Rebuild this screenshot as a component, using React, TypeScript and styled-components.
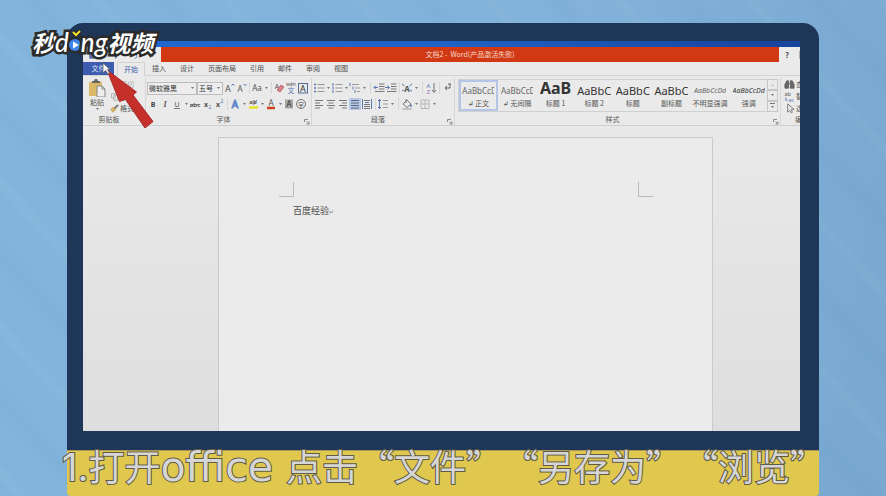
import React from "react";
import styled, { createGlobalStyle } from "styled-components";

const Global = createGlobalStyle`
  * { box-sizing: border-box; }
  body { margin: 0; overflow: hidden; font-family: "Noto Sans CJK SC", "Noto Sans", sans-serif; }
  button, select { font: inherit; color: inherit; }
`;

const Stage = styled.main`
  min-height: 100vh;
  padding: 23px 67px 0;
  display: flex;
  flex-direction: column;
  background:
    repeating-linear-gradient(48deg, transparent 0 9px, rgba(255, 255, 255, 0.03) 15px 17px, transparent 24px 51px, rgba(40, 90, 140, 0.03) 64px 66px, transparent 79px 97px),
    linear-gradient(100deg, #83b5dc, #82b2d9 60%, #78a8d0);
`;

const Laptop = styled.section`
  position: relative;
  flex: 1;
  display: flex;
  flex-direction: column;
  padding: 18px 19px 19px 16px;
  border-radius: 16px 16px 0 0;
  background: #1e3658;
`;

const Screen = styled.div`
  flex: 1;
  display: flex;
  flex-direction: column;
  overflow: hidden;
  background: #eaeaea;
  color: #555;
`;

const Wallpaper = styled.div`
  height: 6px;
  background: linear-gradient(90deg, #2168cf, #2062c6 50%, #17439b);
`;

const TitleBar = styled.header`
  display: flex;
  height: 15px;
`;

const QuickAccess = styled.div`
  width: 78px;
  display: flex;
  align-items: center;
  gap: 8px;
  padding: 0 2px 0 4px;
`;

const WindowTitle = styled.h1`
  flex: 1;
  margin: 0;
  background: #d03914;
  color: #f8d8cc;
  font-size: 7px;
  font-weight: 400;
  line-height: 15px;
  text-align: center;
  white-space: pre;
`;

const WindowButtons = styled.div`
  width: 21px;
  display: flex;
  gap: 4px;
  overflow: hidden;
  padding-left: 2px;
`;

const BareButton = styled.button<{ $w?: number; $on?: boolean }>`
  flex: none;
  width: ${(p) => p.$w ?? 12}px;
  height: 12px;
  padding: 0;
  border: 0;
  display: flex;
  align-items: center;
  justify-content: center;
  background: ${(p) => (p.$on ? "#b9c9e6" : "transparent")};
  svg { display: block; flex: none; }
`;

const HelpButton = styled(BareButton)`
  height: 15px;
  font-size: 8px;
  font-weight: 700;
`;

const Tabs = styled.nav`
  display: flex;
  height: 13px;
`;

const Tab = styled.button<{ $kind?: "file" | "active" }>`
  height: ${(p) => (p.$kind === "active" ? 14 : 13)}px;
  padding: 0 7px;
  border: 0;
  font-size: 7px;
  line-height: 13px;
  white-space: nowrap;
  background: transparent;
  color: #4c4c4c;
  ${(p) => p.$kind === "file" && "width: 31px; margin-right: 3px; background: #3d5cb0; color: #d8e2f6;"}
  ${(p) => p.$kind === "active" && "z-index: 1; background: #eaeaea; color: #3f60ac; box-shadow: inset 1px 1px #d2d2d2, inset -1px 0 #d2d2d2;"}
`;

const Ribbon = styled.div`
  display: flex;
  border-top: 1px solid #d3d3d3;
  border-bottom: 1px solid #cfcfcf;
  padding: 2px 0 0;
`;

const Group = styled.section<{ $w?: number }>`
  flex: ${(p) => (p.$w ? `none` : "1")};
  width: ${(p) => (p.$w ? `${p.$w}px` : "auto")};
  min-width: 0;
  display: flex;
  flex-direction: column;
  overflow: hidden;
  border-right: 1px solid #d6d6d6;
  &:last-child { border-right: 0; }
`;

const GroupBody = styled.div<{ $row?: boolean }>`
  height: 36px;
  display: flex;
  flex-direction: ${(p) => (p.$row ? "row" : "column")};
  gap: ${(p) => (p.$row ? 0 : 4)}px;
  padding: ${(p) => (p.$row ? 0 : 4)}px 0 0 1px;
`;

const GroupFoot = styled.footer`
  position: relative;
  height: 11px;
  padding-right: 10px;
  font-size: 7px;
  line-height: 11px;
  text-align: center;
  white-space: nowrap;
`;

const Launcher = styled.button`
  position: absolute;
  right: 1px;
  bottom: 0;
  width: 6px;
  height: 8px;
  padding: 0;
  border: 0;
  background: transparent;
  svg { display: block; }
`;

const ToolRow = styled.div`
  display: flex;
  height: 12px;
  align-items: center;
`;

const Rule = styled.span<{ $wide?: boolean }>`
  flex: none;
  width: ${(p) => (p.$wide ? 6 : 4)}px;
  height: 12px;
  background: linear-gradient(#d6d6d6, #d6d6d6) center / 1px 100% no-repeat;
`;

const Picker = styled.label<{ $w: number }>`
  position: relative;
  flex: none;
  width: ${(p) => p.$w}px;
  height: 13px;
  svg { position: absolute; right: 2px; top: 4px; pointer-events: none; }
  select {
    display: block;
    width: 100%;
    height: 13px;
    padding: 0 1px;
    border: 1px solid #bdbdbd;
    border-radius: 0;
    appearance: none;
    background: #ededed;
    color: #333;
    font-size: 7px;
    line-height: 11px;
  }
`;

const PasteButton = styled.button`
  width: 26px;
  padding: 1px 0 0;
  border: 0;
  display: flex;
  flex-direction: column;
  align-items: center;
  background: transparent;
  font-size: 7px;
  line-height: 10px;
`;

const SideList = styled.div<{ $inset?: number }>`
  display: flex;
  flex-direction: column;
  padding-left: ${(p) => p.$inset ?? 0}px;
`;

const SideButton = styled.button<{ $dim?: boolean }>`
  height: 12px;
  padding: 0;
  border: 0;
  display: flex;
  align-items: center;
  gap: 1px;
  background: transparent;
  color: ${(p) => (p.$dim ? "#aaa" : "#555")};
  font-size: 7px;
  line-height: 12px;
  white-space: nowrap;
  svg { flex: none; }
`;

const EditFoot = styled.footer`
  padding-left: 14px;
  font-size: 7px;
  line-height: 11px;
  white-space: nowrap;
`;

const Gallery = styled.div`
  flex: 1;
  display: flex;
  height: 33px;
  margin: 1px 2px 0;
  border: 1px solid #d0d0d0;
`;

const StyleCard = styled.button<{ $on?: boolean }>`
  flex: 1;
  min-width: 0;
  padding: 0;
  border: 0;
  background: transparent;
  box-shadow: ${(p) => (p.$on ? "inset 0 0 0 2px #b4c5e6" : "none")};
  overflow: hidden;
  display: flex;
  flex-direction: column;
  align-items: center;
`;

const Sample = styled.span<{ $size: number; $bold?: boolean; $italic?: boolean; $dark?: boolean }>`
  height: 19px;
  max-width: ${(p) => (p.$size === 8 ? 32 : 36)}px;
  overflow: hidden;
  font-family: "Noto Sans", sans-serif;
  font-size: ${(p) => p.$size}px;
  line-height: ${(p) => (p.$size > 12 ? 17 : 21)}px;
  font-weight: ${(p) => (p.$bold ? 700 : 400)};
  font-style: ${(p) => (p.$italic ? "italic" : "normal")};
  color: ${(p) => (p.$dark ? "#333" : "#666")};
  white-space: nowrap;
`;

const SampleName = styled.span`
  font-size: 7px;
  line-height: 9px;
  white-space: nowrap;
`;

const Scroller = styled.div`
  width: 9px;
  display: grid;
  grid-template-rows: repeat(3, 1fr);
`;

const ScrollButton = styled.button`
  padding: 0;
  border: 0;
  display: grid;
  place-items: center;
  background: transparent;
  box-shadow: 0 0 0 1px #c6c6c6;
`;

const Desk = styled.div`
  flex: 1;
  display: flex;
  padding: 11px 87px 0 135px;
  background: linear-gradient(#e9e9e9, #dedede);
`;

const Paper = styled.article`
  flex: 1;
  padding: 44px 59px 0 60px;
  border: 1px solid #cacaca;
  border-bottom: 0;
  background: #ebebeb;
`;

const Margins = styled.div`
  display: flex;
  justify-content: space-between;
`;

const Corner = styled.span<{ $side: "left" | "right" }>`
  width: 15px;
  height: 15px;
  border-bottom: 1px solid #bababa;
  border-${(p) => (p.$side === "left" ? "right" : "left")}: 1px solid #bababa;
`;

const Paragraph = styled.p`
  margin: 7px 0 0 14px;
  font-size: 9px;
  line-height: 14px;
  color: #4a4a4a;
  small { font-size: 6px; color: #888; }
`;

const Caption = styled.footer`
  position: relative;
  height: 46px;
  border-radius: 0 0 4px 4px;
  background: #e0c84f;
  box-shadow: inset 0 1px #a8965a;
`;

const CaptionText = styled.p`
  margin: 0 0 0 -5px;
  color: #d6d6d6;
  font-size: 36px;
  line-height: 31px;
  white-space: pre;
  text-spacing-trim: space-all;
  -webkit-text-stroke: 2px #5f5b45;
  paint-order: stroke fill;
`;

const Numeral = styled.span`
  font-family: Inter, sans-serif;
  font-size: 38px;
`;

const Wide = styled.span`
  font-family: "DejaVu Sans", sans-serif;
  font-size: 41px;
`;

const Watermark = styled.div`
  position: absolute;
  left: -35px;
  top: 2px;
  display: flex;
  align-items: baseline;
  color: #fff;
  font-size: 23px;
  font-weight: 700;
  font-style: italic;
  line-height: 35px;
  -webkit-text-stroke: 5px #2b2b2b;
  paint-order: stroke fill;
  svg { flex: none; overflow: visible; margin: 0 -1px; }
`;

const Roman = styled.span`
  font-family: Lato, sans-serif;
  font-size: 26px;
  font-weight: 500;
`;

const Pointer = styled.svg`
  position: absolute;
  left: 34px;
  top: 39px;
  width: 54px;
  height: 70px;
  overflow: visible;
  pointer-events: none;
`;

const G = "#777";
const B = "#5877b4";

const Caret = () => (
  <svg width="5" height="4" viewBox="0 0 5 4"><path d="M1 1h3L2.500 3z" fill="#777" /></svg>
);

const Glyph = ({ children, size = 12 }: { children?: React.ReactNode; size?: number }) => (
  <svg width={size} height={size} viewBox="0 0 12 12" fill="none" stroke={G} strokeWidth="1" fontFamily="Noto Sans, sans-serif">{children}</svg>
);

const T = ({ x = 6, y = 9, s = 8, c = "#555", children, ...rest }: any) => (
  <text x={x} y={y} fontSize={s} fill={c} stroke="none" textAnchor="middle" {...rest}>{children}</text>
);

const icons: Record<string, React.ReactNode> = {
  grow: <><T x={5} s={9} y={10}>A</T><path d="M8.500 3.500L10 2l1.500 1.500" stroke={B} /></>,
  shrink: <><T x={5} s={8} y={10}>A</T><path d="M8.500 2L10 3.500 11.500 2" stroke={B} /></>,
  case: <T s={8}>Aa</T>,
  clear: <><T x={4} y={7} s={7}>A</T><path d="M4 8l4-5 3 2-4 5z" fill="#d9808c" stroke="#c76b78" /></>,
  phonetic: <><T y={4} s={5}>wén</T><T y={11} s={7} c={B} fontFamily="Noto Sans CJK SC">文</T></>,
  box: <><rect x="1.500" y="1.500" width="9" height="9.500" stroke="#566b96" /><T y={9.500} s={9} c="#333">A</T></>,
  bold: <T s={7} fontWeight="700" c="#444">B</T>,
  italic: <T s={8} fontStyle="italic" fontWeight="700" fontFamily="Liberation Serif">I</T>,
  under: <><T s={7}>U</T><path d="M3 10.500h6" /></>,
  strike: <><T s={6} fontWeight="700">abc</T><path d="M1 6.500h10" /></>,
  sub: <><T x={5} s={7} fontWeight="700">x</T><T x={9} y={11} s={5} c={B}>2</T></>,
  sup: <><T x={5} s={7} fontWeight="700">x</T><T x={9} y={5} s={5} c={B}>2</T></>,
  glow: <text x="6" y="10" fontSize="10" fill="#eaeaea" stroke="#6488cc" textAnchor="middle">A</text>,
  mark: <><T y={6} s={6} fontWeight="700">ab</T><path d="M6 7l4-5" /><path d="M2 9.500h9" stroke="#e6e22e" strokeWidth="2.500" /></>,
  color: <><T y={8} s={8}>A</T><path d="M2 10h8" stroke="#d0421f" strokeWidth="2.500" /></>,
  shade: <><rect x="2" y="1.500" width="8" height="9" fill="#a5a5a5" stroke="none" /><T s={8} c="#333">A</T></>,
  ring: <><circle cx="6" cy="6" r="4.500" /><T y={8.500} s={6} fontFamily="Noto Sans CJK SC">字</T></>,
  bullets: <><path d="M4.500 2.500h7M4.500 6h7M4.500 9.500h7" stroke="#999" /><path d="M1 2.500h2M1 6h2M1 9.500h2" stroke={B} strokeWidth="1.500" /></>,
  numbers: <><path d="M4.500 2.500h7M4.500 6h7M4.500 9.500h7" stroke="#999" /><path d="M2 1v3M2 4.500v3M2 8v3" stroke={B} /></>,
  levels: <><path d="M3 2.500h7M6 6h5M8 9.500h3" stroke="#999" /><path d="M1 1v3M4 4.500v3M6 8v3" stroke={B} /></>,
  outdent: <><path d="M6 2h5.500M6 4.500h5.500M6 7h5.500M2 9.500h9.500" /><path d="M5 5.500H1M3 3.500l-2 2 2 2" stroke={B} /></>,
  indent: <><path d="M6 2h5.500M6 4.500h5.500M6 7h5.500M2 9.500h9.500" /><path d="M0 5.500h4M2.500 3.500l2 2-2 2" stroke={B} /></>,
  asian: <><T s={8} y={10} fontWeight="700">A</T><path d="M1 2l2.500 2M11 2L8.500 4M1 9l2-1M11 9L9 8" stroke={B} /></>,
  sort: <><T x={3.500} y={5.500} s={6} c={B}>A</T><T x={3.500} y={11.500} s={6} c="#9a69ad">Z</T><path d="M9 1v9M7 8l2 2.500L11 8" /></>,
  marks: <path d="M9 2v4H4M6 4L4 6l2 2M7 2h3" stroke="#666" />,
  left: <path d="M2 2.500h8M2 5h5M2 7.500h8M2 10h5" />,
  center: <path d="M2 2.500h8M3.500 5h5M2 7.500h8M3.500 10h5" />,
  right: <path d="M2 2.500h8M5 5h5M2 7.500h8M5 10h5" />,
  justify: <path d="M2 2.500h8M2 5h8M2 7.500h8M2 10h8" stroke="#59657c" />,
  spread: <><path d="M1.500 1v10M10.500 1v10" stroke={B} /><path d="M3 2.500h6M3 6.500h6M3 8.500h6M3 10.500h6" /><path d="M4 4.500h4" stroke={B} /></>,
  spacing: <><path d="M2.500 1.500v9M1 3l1.500-1.500L4 3M1 9l1.500 1.500L4 9" stroke={B} /><path d="M6 2.500h5M6 6h5M6 9.500h5" stroke="#999" /></>,
  fill: <><path d="M2 6l4-4 4 4-4 3.500zM5 1v4" /><path d="M10 6.500v2.500" stroke={B} strokeWidth="1.500" /><path d="M1.500 11h9" stroke="#999" /></>,
  borders: <path d="M2 2h8v8.500H2zM6 2v8.500M2 6h8" stroke="#b5b5b5" />,
  cut: <path d="M3 1l5 7M9 1L4 8" stroke="#aaa" />,
  copy: <path d="M2 2h5v6H2zM5 4h5v7H5z" stroke="#aaa" fill="#e6e6e6" />,
  brush: <><path d="M1 7l4-3 3 3-4 4z" fill="#d9b765" stroke="#c3a253" /><path d="M6 5l4-4 1 1-4 4z" fill="#666" stroke="#666" /></>,
  find: <path d="M1 10V6l2-4h2v8zM7 10V2h2l2 4v4zM5 5h2" fill="#666" stroke="#666" />,
  replace: <><T x={4} y={5.500} s={6}>ab</T><T x={8} y={11.500} s={6} c={B}>ac</T><path d="M2 7v3h2" stroke={B} /></>,
  select: <path d="M4 1v9l2-2 2 3 1-1-1-3h3z" />,
  save: <path d="M2 2h8v8H2zM4 2v3h4V2" fill="#5b6fb4" stroke="#5b6fb4" />,
  undo: <path d="M3 5h5a2 2 0 010 5M5 2L2 5l3 3" stroke={B} />,
};

const labels: Record<string, string> = {
  grow: "增大字号", shrink: "减小字号", case: "更改大小写", clear: "清除格式", phonetic: "拼音指南", box: "字符边框",
  bold: "加粗", italic: "倾斜", under: "下划线", strike: "删除线", sub: "下标", sup: "上标", glow: "文本效果", mark: "突出显示",
  color: "字体颜色", shade: "字符底纹", ring: "带圈字符", bullets: "项目符号", numbers: "编号", levels: "多级列表", outdent: "减少缩进",
  indent: "增加缩进", asian: "中文版式", sort: "排序", marks: "显示标记", left: "左对齐", center: "居中", right: "右对齐",
  justify: "两端对齐", spread: "分散对齐", spacing: "行距", fill: "底纹", borders: "边框",
};

const Tools = ({ items }: { items: string[] }) => (
  <>
    {items.map((name, i) => {
      if (name === "|") return <Rule key={i} />;
      if (name === "||") return <Rule key={i} $wide />;
      if (name === "v") return <BareButton key={i} $w={6} aria-label={`${labels[items[i - 1]]}选项`}><Caret /></BareButton>;
      return <BareButton key={i} $on={name === "justify"} aria-label={labels[name]}><Glyph>{icons[name]}</Glyph></BareButton>;
    })}
  </>
);

const Foot = ({ name, launch = true }: { name: string; launch?: boolean }) => (
  <GroupFoot>
    {name}
    {launch && (
      <Launcher aria-label={`${name}设置`}>
        <svg width="6" height="7" viewBox="0 0 6 7" fill="none" stroke="#888"><path d="M.5 4V1.500H4M2.500 3.500l2.500 2.500M5 3.500V6H2.500" /></svg>
      </Launcher>
    )}
  </GroupFoot>
);

const styleCards = [
  { text: "AaBbCcD", name: "↲ 正文", size: 8 },
  { text: "AaBbCcD", name: "↲ 无间隔", size: 8 },
  { text: "AaB", name: "标题 1", size: 16, bold: true, dark: true },
  { text: "AaBbC", name: "标题 2", size: 11, dark: true },
  { text: "AaBbC", name: "标题", size: 11, dark: true },
  { text: "AaBbC", name: "副标题", size: 11, dark: true },
  { text: "AaBbCcDd", name: "不明显强调", size: 7, italic: true },
  { text: "AaBbCcDd", name: "强调", size: 7, italic: true, dark: true },
];

const moreTabs = ["插入", "设计", "页面布局", "引用", "邮件", "审阅", "视图"];

export default function App() {
  return (
    <>
      <Global />
      <Stage>
        <Laptop>
          <Screen>
            <Wallpaper />
            <TitleBar>
              <QuickAccess>
                <BareButton aria-label="保存"><Glyph size={10}>{icons.save}</Glyph></BareButton>
                <BareButton aria-label="撤消"><Glyph size={10}>{icons.undo}</Glyph></BareButton>
                <BareButton aria-label="恢复"><Glyph size={10}>{icons.undo}</Glyph></BareButton>
                <BareButton $w={10} aria-label="自定义快速访问工具栏">
                  <svg width="5" height="7" viewBox="0 0 5 7"><path d="M1 1h3v1H1zM1 4h3L2.500 6z" fill="#666" /></svg>
                </BareButton>
              </QuickAccess>
              <WindowTitle>文档2 -  Word(产品激活失败)</WindowTitle>
              <WindowButtons>
                <HelpButton>?</HelpButton>
                <HelpButton aria-label="功能区显示选项"><Glyph><path d="M3 2h8v8H3zM3 4h8" /></Glyph></HelpButton>
              </WindowButtons>
            </TitleBar>
            <Tabs>
              <Tab $kind="file">文件</Tab>
              <Tab $kind="active">开始</Tab>
              {moreTabs.map((t) => <Tab key={t}>{t}</Tab>)}
            </Tabs>
            <Ribbon>
              <Group $w={63}>
                <GroupBody $row>
                  <PasteButton>
                    <svg width="18" height="18" viewBox="0 0 18 18">
                      <path d="M1 3h13v14H1z" fill="#dcb969" />
                      <path d="M4 4V2h2l1-2h2l1 2h2v2z" fill="#666" />
                      <path d="M9 7h5l3 3v8H9z" fill="#eee" stroke="#888" />
                      <path d="M14 7v3h3" fill="none" stroke="#888" />
                    </svg>
                    粘贴
                    <Caret />
                  </PasteButton>
                  <SideList>
                    <SideButton $dim><Glyph size={9}>{icons.cut}</Glyph>剪切</SideButton>
                    <SideButton $dim><Glyph size={9}>{icons.copy}</Glyph>复制</SideButton>
                    <SideButton><Glyph size={9}>{icons.brush}</Glyph>格式刷</SideButton>
                  </SideList>
                </GroupBody>
                <Foot name="剪贴板" launch={false} />
              </Group>
              <Group $w={166}>
                <GroupBody>
                  <ToolRow>
                    <Picker $w={50}>
                      <select aria-label="字体" defaultValue="微软雅黑"><option>微软雅黑</option></select>
                      <Caret />
                    </Picker>
                    <Picker $w={26}>
                      <select aria-label="字号" defaultValue="五号"><option>五号</option></select>
                      <Caret />
                    </Picker>
                    <Tools items={["grow", "shrink", "|", "case", "v", "|", "clear", "phonetic", "box"]} />
                  </ToolRow>
                  <ToolRow>
                    <Tools items={["bold", "italic", "under", "v", "strike", "sub", "sup", "|", "glow", "v", "mark", "v", "color", "v", "shade", "ring"]} />
                  </ToolRow>
                </GroupBody>
                <Foot name="字体" />
              </Group>
              <Group $w={143}>
                <GroupBody>
                  <ToolRow>
                    <Tools items={["bullets", "v", "numbers", "v", "levels", "v", "||", "outdent", "indent", "|", "asian", "v", "||", "sort", "|", "marks"]} />
                  </ToolRow>
                  <ToolRow>
                    <Tools items={["left", "center", "right", "justify", "spread", "|", "spacing", "v", "||", "fill", "v", "borders", "v"]} />
                  </ToolRow>
                </GroupBody>
                <Foot name="段落" />
              </Group>
              <Group>
                <GroupBody $row>
                  <Gallery>
                    {styleCards.map((c, i) => (
                      <StyleCard key={c.name} $on={i === 0}>
                        <Sample $size={c.size} $bold={c.bold} $italic={c.italic} $dark={c.dark}>{c.text}</Sample>
                        <SampleName>{c.name}</SampleName>
                      </StyleCard>
                    ))}
                    <Scroller>
                      <ScrollButton aria-label="向上"><svg width="5" height="4"><path d="M1 3h3L2.500 1z" fill="#bbb" /></svg></ScrollButton>
                      <ScrollButton aria-label="向下"><Caret /></ScrollButton>
                      <ScrollButton aria-label="更多样式"><svg width="5" height="6"><path d="M0 0h5v1H0zM1 3h3L2.500 5z" fill="#777" /></svg></ScrollButton>
                    </Scroller>
                  </Gallery>
                </GroupBody>
                <Foot name="样式" />
              </Group>
              <Group $w={19}>
                <GroupBody $row>
                  <SideList $inset={2}>
                    <SideButton><Glyph size={11}>{icons.find}</Glyph>查找</SideButton>
                    <SideButton><Glyph size={11}>{icons.replace}</Glyph>替换</SideButton>
                    <SideButton><Glyph size={11}>{icons.select}</Glyph>选择</SideButton>
                  </SideList>
                </GroupBody>
                <EditFoot>编辑</EditFoot>
              </Group>
            </Ribbon>
            <Desk>
              <Paper>
                <Margins>
                  <Corner $side="left" />
                  <Corner $side="right" />
                </Margins>
                <Paragraph>百度经验<small>↵</small></Paragraph>
              </Paper>
            </Desk>
          </Screen>
          <Pointer viewBox="0 0 54 70">
            <path d="M6 8l12.500 31.500 6-2L44 66l8-6.500L32 33l3.500-3z" fill="#c5302b" stroke="#a52a28" strokeWidth="1" />
            <path d="M2 1v10l2.500-2.500L7 12l1.500-1-2-3.500H9z" fill="#f4f4f4" stroke="#555" strokeWidth=".7" />
          </Pointer>
          <Watermark>
            <span>秒</span>
            <Roman>d</Roman>
            <svg width="14" height="20" viewBox="0 0 14 20">
              <circle cx="7" cy="13" r="8" fill="#2b2b2b" stroke="none" />
              <circle cx="7" cy="13" r="6" fill="#3f83ef" stroke="none" />
              <path d="M5 9.500l6 3.500-6 3.500z" fill="#fff" stroke="none" />
              <path d="M5 0l3 3 4-4" fill="none" stroke="#2b2b2b" strokeWidth="5" />
              <path d="M5 0l3 3 4-4" fill="none" stroke="#f4e12c" strokeWidth="2" />
            </svg>
            <Roman>ng</Roman>
            <span>视频</span>
          </Watermark>
        </Laptop>
        <Caption>
          <CaptionText><Numeral>1.</Numeral>打开<Wide>office </Wide>点击“文件”“另存为”“浏览”</CaptionText>
        </Caption>
      </Stage>
    </>
  );
}
